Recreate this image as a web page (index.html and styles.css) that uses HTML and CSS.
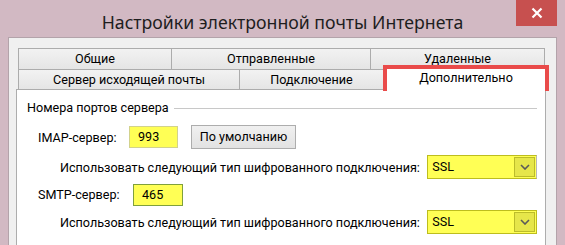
FILE: index.html
```html
<!DOCTYPE html>
<html lang="ru">
<head>
  <meta charset="UTF-8">
  <meta name="viewport" content="width=device-width, initial-scale=1.0">
  <title>Настройки электронной почты Интернета</title>
  <link rel="stylesheet" href="styles.css">
</head>
<body>
  <div class="window">
    <div class="caption">
      <div class="caption-spacer"></div>
      <div class="caption-title">Настройки электронной почты Интернета</div>
      <div class="close-btn">
        <svg viewBox="0 0 12 12" width="12" height="12">
          <path d="M1.5 1.5 L10.5 10.5 M10.5 1.5 L1.5 10.5" stroke="#fff" stroke-width="2.2" fill="none"></path>
        </svg>
      </div>
    </div>

    <div class="client">
      <div class="tabs">
        <div class="tab-row first-row">
          <div class="tab w-general">Общие</div>
          <div class="tab w-sent">Отправленные</div>
          <div class="tab w-deleted">Удаленные</div>
        </div>
        <div class="tab-row second-row">
          <div class="tab w-outgoing">Сервер исходящей почты</div>
          <div class="tab w-connection">Подключение</div>
          <div class="tab active">Дополнительно</div>
        </div>
      </div>

      <div class="panel">
        <div class="group-title">
          <span>Номера портов сервера</span>
          <div class="group-line"></div>
        </div>

        <div class="row port-row imap">
          <label class="port-label imap-label">IMAP-сервер:</label>
          <div class="port-input">993</div>
          <div class="button">По умолчанию</div>
        </div>

        <div class="row enc-row enc-first">
          <span class="enc-label">Использовать следующий тип шифрованного подключения:</span>
          <div class="select">
            <span class="select-value">SSL</span>
            <span class="select-arrow">
              <svg viewBox="0 0 10 6" width="10" height="6">
                <path d="M1 1 L5 5 L9 1" stroke="#5a5a5a" stroke-width="1.6" fill="none"></path>
              </svg>
            </span>
          </div>
        </div>

        <div class="row port-row smtp">
          <label class="port-label smtp-label">SMTP-сервер:</label>
          <div class="port-input focused">465</div>
        </div>

        <div class="row enc-row enc-second">
          <span class="enc-label">Использовать следующий тип шифрованного подключения:</span>
          <div class="select">
            <span class="select-value">SSL</span>
            <span class="select-arrow">
              <svg viewBox="0 0 10 6" width="10" height="6">
                <path d="M1 1 L5 5 L9 1" stroke="#5a5a5a" stroke-width="1.6" fill="none"></path>
              </svg>
            </span>
          </div>
        </div>
      </div>
    </div>
  </div>
</body>
</html>
```

FILE: styles.css
```css
* {
  box-sizing: border-box;
}

html, body {
  margin: 0;
  padding: 0;
  width: 565px;
  height: 245px;
  overflow: hidden;
}

body {
  background: #d2b9c3;
  font-family: Roboto, "Noto Sans", sans-serif;
  font-size: 12.6px;
  color: #000;
  white-space: nowrap;
}

.caption {
  display: grid;
  grid-template-columns: 49px 1fr 49px;
  height: 37px;
}

.caption-title {
  text-align: center;
  font-family: "Noto Sans", sans-serif;
  font-size: 17.7px;
  line-height: 24px;
  padding-top: 10px;
  color: #1e1e1e;
}

.close-btn {
  display: flex;
  align-items: center;
  justify-content: center;
  width: 41px;
  height: 26px;
  background: #c7504f;
}

.client {
  margin: 0 8px;
  height: 208px;
  background: #f0f0f0;
  border: 1px solid #b3a3aa;
  border-bottom: none;
  padding: 10px 0 0 7px;
}

.tabs {
  padding-left: 2px;
}

.tab-row {
  display: flex;
  height: 22px;
}

.second-row {
  height: 21px;
  margin-top: -1px;
}

.tab {
  height: 22px;
  border: 1px solid #acacac;
  background: linear-gradient(#f2f2f2, #e5e5e5);
  text-align: center;
  line-height: 20px;
}

.tab + .tab {
  margin-left: -1px;
}

.second-row .tab {
  height: 21px;
  line-height: 19px;
}

.w-general { width: 154px; }
.w-sent { width: 200px; }
.w-deleted { width: 175px; }
.w-outgoing { width: 222px; }
.w-connection { width: 145px; }

.second-row .tab.active {
  position: relative;
  z-index: 1;
  width: 166px;
  height: 26px;
  margin-top: -4px;
  background: #fff;
  border: 4px solid #e94b4a;
  border-bottom: none;
  line-height: 18px;
}

.panel {
  width: 530px;
  height: 160px;
  margin-top: -1px;
  background: #fff;
  border: 1px solid #adadad;
  border-bottom: none;
  padding: 9px 8px 0 10px;
}

.group-title {
  display: flex;
  align-items: center;
  height: 18px;
  line-height: 18px;
}

.group-line {
  flex: 1;
  height: 1px;
  margin-left: 5px;
  background: #c8c8c8;
}

.row {
  display: flex;
  align-items: center;
}

.port-row {
  padding-left: 11px;
}

.imap {
  margin-top: 8px;
  height: 24px;
}

.smtp {
  margin-top: 4px;
  height: 23px;
}

.imap-label { width: 91px; }
.smtp-label { width: 95px; }

.port-input {
  width: 49px;
  height: 22px;
  background: #ffff55;
  border: 1px solid #d2d28c;
  padding-left: 8px;
  line-height: 20px;
}

.port-input.focused {
  width: 50px;
  border-color: #7fa03c;
}

.button {
  width: 105px;
  height: 24px;
  margin-left: 13px;
  border: 1px solid #adadad;
  background: linear-gradient(#f0f0f0, #e2e2e2);
  text-align: center;
  line-height: 21px;
}

.enc-row {
  padding-left: 33px;
  height: 24px;
}

.enc-first {
  margin-top: 6px;
}

.enc-second {
  margin-top: 4px;
}

.enc-label {
  width: 368px;
}

.select {
  display: flex;
  align-items: center;
  width: 110px;
  height: 24px;
  background: #ffff55;
  border: 1px solid #bdbd1e;
  border-right-color: #b8b8b8;
  padding: 0 1px 0 4px;
}

.enc-second .select {
  border-right-color: #bdbd1e;
}

.select-value {
  flex: 1;
  line-height: 20px;
}

.select-arrow {
  display: flex;
  align-items: center;
  justify-content: center;
  width: 21px;
  height: 20px;
  background: #e6e64a;
  border: 1px solid #bcbc2a;
}
```
